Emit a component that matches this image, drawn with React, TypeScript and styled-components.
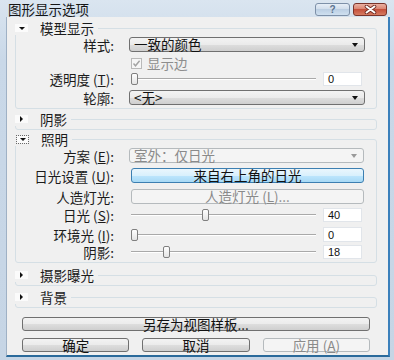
import React from 'react';
import styled, { createGlobalStyle, css } from 'styled-components';

const GlobalStyle = createGlobalStyle`
  html, body {
    margin: 0;
    padding: 0;
  }
  body {
    width: 394px;
    height: 360px;
    overflow: hidden;
    background: #cbd9e8;
    font-family: "Noto Sans CJK SC", "Liberation Sans", sans-serif;
    color: #1b1b1b;
  }
`;

const Window = styled.div`
  box-sizing: border-box;
  width: 394px;
  height: 360px;
  display: flex;
  flex-direction: column;
  padding: 0 4px 3px 6px;
  background: linear-gradient(#dae5f0, #c9d8e8 60px, #c6d5e5);
`;

const TitleBar = styled.div`
  height: 17px;
  display: flex;
  align-items: flex-start;
  padding-left: 2px;
`;

const Title = styled.div`
  flex: 1;
  margin-top: 2px;
  font-size: 13.5px;
  line-height: 14px;
  color: #151515;
`;

const CaptionButtons = styled.div`
  display: flex;
  gap: 3px;
  margin: 3px 3px 0 0;
`;

const CaptionButton = styled.div<{ $kind: 'help' | 'close' }>`
  box-sizing: border-box;
  height: 13px;
  display: flex;
  align-items: center;
  justify-content: center;
  border-radius: 3px;
  ${p =>
    p.$kind === 'help'
      ? css`
          width: 35px;
          border: 1px solid #7d90a8;
          background: linear-gradient(#e6eef7, #cfdcea 50%, #bccfe3 50%, #cfe0f0);
          color: #5a7390;
          font: bold 10px "Liberation Sans", sans-serif;
        `
      : css`
          width: 34px;
          border: 1px solid #7a342b;
          background: linear-gradient(#eab0a2, #d9806c 50%, #c5513c 50%, #d67b62);
        `}
`;

const Client = styled.div`
  flex: 1;
  min-height: 0;
  display: flex;
  flex-direction: column;
  background: #f0f0f0;
  border-left: 1px solid #9fb1c5;
  border-right: 2px solid #3b80bb;
  border-bottom: 2px solid #2a6a9b;
  padding: 0 11px 0 8px;
`;

const Group = styled.fieldset<{ $mt: number }>`
  margin: ${p => p.$mt}px 0 0;
  padding: 0 11px 3px 0;
  min-width: 0;
  border: 1px solid #d5dfe5;
  border-radius: 3px;
`;

const Legend = styled.legend`
  box-sizing: border-box;
  display: flex;
  align-items: center;
  margin-left: -1px;
  padding: 0 4px 0 0;
  height: 14px;
  font-size: 13.5px;
  line-height: 14px;
  overflow: visible;
`;

const Expander = styled.span<{ $focused?: boolean }>`
  box-sizing: border-box;
  flex: none;
  width: 13px;
  height: 8px;
  margin-right: 12px;
  display: flex;
  align-items: center;
  justify-content: center;
  background: #fbfbfb;
  ${p =>
    p.$focused &&
    css`
      width: 11px;
      height: 7px;
      margin: 0 13px 0 2px;
      outline: 1px dotted #6a6a6a;
    `}
`;

const Caret = styled.span<{ $open: boolean }>`
  width: 0;
  height: 0;
  ${p =>
    p.$open
      ? css`
          border-left: 3px solid transparent;
          border-right: 3px solid transparent;
          border-top: 3px solid #111;
        `
      : css`
          border-top: 3px solid transparent;
          border-bottom: 3px solid transparent;
          border-left: 3px solid #111;
        `}
`;

const Row = styled.div<{ $mt: number; $h: number }>`
  display: grid;
  grid-template-columns: 98px 1fr;
  column-gap: 15px;
  height: ${p => p.$h}px;
  margin-top: ${p => p.$mt}px;
`;

const Label = styled.span`
  align-self: center;
  text-align: right;
  white-space: nowrap;
  font-size: 13.5px;
  line-height: 14px;
`;

const Mn = styled.span`
  text-decoration: underline;
`;

const Select = styled.div<{ $disabled?: boolean }>`
  box-sizing: border-box;
  height: 100%;
  display: flex;
  align-items: center;
  justify-content: space-between;
  padding: 0 6px 0 4px;
  border-radius: 3px;
  font-size: 13.5px;
  line-height: 13px;
  white-space: nowrap;
  ${p =>
    p.$disabled
      ? css`
          margin-right: 1px;
          border: 1px solid #b5babd;
          background: #f4f4f4;
          color: #8a8a8a;
        `
      : css`
          border: 1px solid #707070;
          background: linear-gradient(#f3f3f3, #ebebeb 50%, #dedede 50%, #cfcfcf);
          color: #111;
        `}
`;

const Arrow = styled.span<{ $disabled?: boolean }>`
  width: 0;
  height: 0;
  border-left: 3px solid transparent;
  border-right: 3px solid transparent;
  border-top: 4px solid ${p => (p.$disabled ? '#9a9a9a' : '#111')};
`;

const CheckLine = styled.div`
  display: flex;
  align-items: center;
  padding-left: 2px;
  font-size: 13.5px;
  line-height: 14px;
  color: #8d8d8d;
`;

const CheckBox = styled.span`
  box-sizing: border-box;
  width: 11px;
  height: 11px;
  margin-right: 5px;
  display: inline-flex;
  align-items: center;
  justify-content: center;
  border: 1px solid #b9b9b9;
  background: #f6f6f6;
`;

const ActionButton = styled.div<{ $variant: 'normal' | 'hot' | 'disabled' }>`
  box-sizing: border-box;
  height: 100%;
  display: flex;
  align-items: center;
  justify-content: center;
  border-radius: 3px;
  font-size: 13.5px;
  line-height: 13px;
  white-space: nowrap;
  ${p =>
    p.$variant === 'hot'
      ? css`
          border: 1px solid #3c7fb1;
          background: linear-gradient(#eaf6fd, #d9f0fc 50%, #bee6fd 50%, #a7d9f5);
          color: #111;
        `
      : p.$variant === 'disabled'
        ? css`
            border: 1px solid #b5babd;
            background: #f4f4f4;
            color: #8a8a8a;
          `
        : css`
            border: 1px solid #707070;
            background: linear-gradient(#f3f3f3, #ebebeb 50%, #dedede 50%, #cfcfcf);
            color: #111;
          `}
`;

const InsetButton = styled(ActionButton)`
  margin: 0 1px 0 2px;
`;

const SliderField = styled.div`
  height: 100%;
  display: flex;
  align-items: center;
  gap: 7px;
  padding: 0 3px 0 2px;
`;

const Track = styled.div`
  position: relative;
  flex: 1;
  height: 12px;
  &::before {
    content: '';
    position: absolute;
    left: 0;
    right: 0;
    top: 5px;
    height: 1px;
    background: #a9a9a9;
    box-shadow: 0 1px 0 #fff;
  }
`;

const Thumb = styled.div`
  position: absolute;
  top: 0;
  box-sizing: border-box;
  width: 7px;
  height: 12px;
  border: 1px solid #7f7f7f;
  border-radius: 2px;
  background: linear-gradient(#fefefe, #e4e4e4);
`;

const NumberBox = styled.div`
  box-sizing: border-box;
  width: 39px;
  height: 100%;
  padding: 0 4px;
  display: flex;
  align-items: center;
  background: #fff;
  border: 1px solid #e1e5ea;
  font: 11px "Liberation Sans", sans-serif;
  color: #111;
`;

const WideButton = styled(ActionButton)`
  flex: none;
  height: 14px;
  margin: 9px 7px 0;
`;

const Footer = styled.div`
  display: flex;
  gap: 13px;
  height: 14px;
  margin: 7px 7px 0;
  & > * {
    flex: 1;
  }
`;

const Slider = ({ value }: { value: number }) => (
  <SliderField>
    <Track>
      <Thumb style={{ left: `calc((100% - 7px) * ${value / 100})` }} />
    </Track>
    <NumberBox>{value}</NumberBox>
  </SliderField>
);

const Header = ({ title, open, focused }: { title: string; open: boolean; focused?: boolean }) => (
  <Legend>
    <Expander $focused={focused}>
      <Caret $open={open} />
    </Expander>
    {title}
  </Legend>
);

export default function App() {
  return (
    <>
      <GlobalStyle />
      <Window>
        <TitleBar>
          <Title>图形显示选项</Title>
          <CaptionButtons>
            <CaptionButton $kind="help">?</CaptionButton>
            <CaptionButton $kind="close">
              <svg width="13" height="9" viewBox="0 0 13 9">
                <path d="M2.5 1.5 L10.5 7.5 M10.5 1.5 L2.5 7.5" stroke="#6e2a22" strokeWidth="3.6" strokeLinecap="round" />
                <path d="M2.5 1.5 L10.5 7.5 M10.5 1.5 L2.5 7.5" stroke="#ffffff" strokeWidth="2" strokeLinecap="round" />
              </svg>
            </CaptionButton>
          </CaptionButtons>
        </TitleBar>

        <Client>
          <Group $mt={4}>
            <Header title="模型显示" open />
            <Row $mt={2} $h={15}>
              <Label>样式:</Label>
              <Select>
                一致的颜色
                <Arrow />
              </Select>
            </Row>
            <Row $mt={4} $h={14}>
              <span />
              <CheckLine>
                <CheckBox>
                  <svg width="9" height="9" viewBox="0 0 9 9">
                    <path d="M1.5 4.5 L3.5 6.8 L7.6 1.8" fill="none" stroke="#a3a3a3" strokeWidth="1.4" />
                  </svg>
                </CheckBox>
                显示边
              </CheckLine>
            </Row>
            <Row $mt={2} $h={14}>
              <Label>
                透明度 (<Mn>T</Mn>):
              </Label>
              <Slider value={0} />
            </Row>
            <Row $mt={4} $h={15}>
              <Label>轮廓:</Label>
              <Select>
                &lt;无&gt;
                <Arrow />
              </Select>
            </Row>
          </Group>

          <Group $mt={3}>
            <Header title="阴影" open={false} />
          </Group>

          <Group $mt={2}>
            <Header title="照明" open focused />
            <Row $mt={2} $h={14}>
              <Label>
                方案 (<Mn>E</Mn>):
              </Label>
              <Select $disabled>
                室外：仅日光
                <Arrow $disabled />
              </Select>
            </Row>
            <Row $mt={6} $h={14}>
              <Label>
                日光设置 (<Mn>U</Mn>):
              </Label>
              <InsetButton $variant="hot">来自右上角的日光</InsetButton>
            </Row>
            <Row $mt={7} $h={14}>
              <Label>人造灯光:</Label>
              <InsetButton $variant="disabled">
                人造灯光 (<Mn>L</Mn>)...
              </InsetButton>
            </Row>
            <Row $mt={5} $h={14}>
              <Label>
                日光 (<Mn>S</Mn>):
              </Label>
              <Slider value={40} />
            </Row>
            <Row $mt={5} $h={15}>
              <Label>
                环境光 (<Mn>I</Mn>):
              </Label>
              <Slider value={0} />
            </Row>
            <Row $mt={3} $h={14}>
              <Label>阴影:</Label>
              <Slider value={18} />
            </Row>
          </Group>

          <Group $mt={5}>
            <Header title="摄影曝光" open={false} />
          </Group>

          <Group $mt={4}>
            <Header title="背景" open={false} />
          </Group>

          <WideButton $variant="normal">另存为视图样板...</WideButton>

          <Footer>
            <ActionButton $variant="normal">确定</ActionButton>
            <ActionButton $variant="normal">取消</ActionButton>
            <ActionButton $variant="disabled">
              应用 (<Mn>A</Mn>)
            </ActionButton>
          </Footer>
        </Client>
      </Window>
    </>
  );
}
